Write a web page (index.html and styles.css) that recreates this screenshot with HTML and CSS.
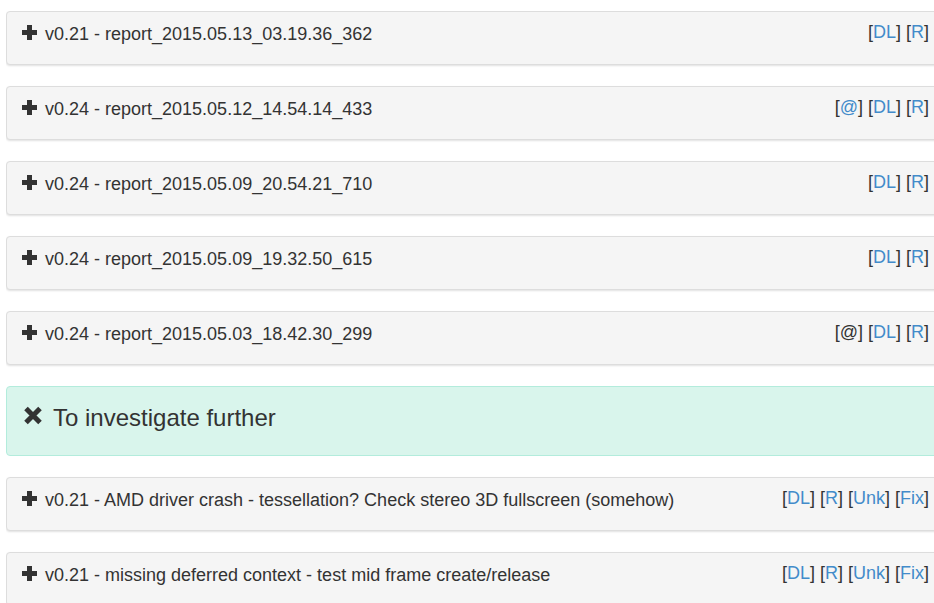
FILE: index.html
```html
<!DOCTYPE html>
<html>
<head>
<meta charset="utf-8">
<link rel="stylesheet" href="styles.css">
</head>
<body>
<div class="list">
  <div class="panel">
    <div class="title"><svg class="plus" viewBox="0 0 15 15"><rect x="5" y="0" width="5" height="15"/><rect x="0" y="5" width="15" height="5"/></svg>v0.21 - report_2015.05.13_03.19.36_362</div>
    <div class="links">[<a href="#">DL</a>] [<a href="#">R</a>]</div>
  </div>
  <div class="panel">
    <div class="title"><svg class="plus" viewBox="0 0 15 15"><rect x="5" y="0" width="5" height="15"/><rect x="0" y="5" width="15" height="5"/></svg>v0.24 - report_2015.05.12_14.54.14_433</div>
    <div class="links">[<a href="#">@</a>] [<a href="#">DL</a>] [<a href="#">R</a>]</div>
  </div>
  <div class="panel">
    <div class="title"><svg class="plus" viewBox="0 0 15 15"><rect x="5" y="0" width="5" height="15"/><rect x="0" y="5" width="15" height="5"/></svg>v0.24 - report_2015.05.09_20.54.21_710</div>
    <div class="links">[<a href="#">DL</a>] [<a href="#">R</a>]</div>
  </div>
  <div class="panel">
    <div class="title"><svg class="plus" viewBox="0 0 15 15"><rect x="5" y="0" width="5" height="15"/><rect x="0" y="5" width="15" height="5"/></svg>v0.24 - report_2015.05.09_19.32.50_615</div>
    <div class="links">[<a href="#">DL</a>] [<a href="#">R</a>]</div>
  </div>
  <div class="panel">
    <div class="title"><svg class="plus" viewBox="0 0 15 15"><rect x="5" y="0" width="5" height="15"/><rect x="0" y="5" width="15" height="5"/></svg>v0.24 - report_2015.05.03_18.42.30_299</div>
    <div class="links">[@] [<a href="#">DL</a>] [<a href="#">R</a>]</div>
  </div>
  <div class="alert">
    <svg class="remove" viewBox="0 0 20 19"><path d="M3 2.5 L17 16.5 M17 2.5 L3 16.5"/></svg>To investigate further
  </div>
  <div class="panel">
    <div class="title"><svg class="plus" viewBox="0 0 15 15"><rect x="5" y="0" width="5" height="15"/><rect x="0" y="5" width="15" height="5"/></svg>v0.21 - AMD driver crash - tessellation? Check stereo 3D fullscreen (somehow)</div>
    <div class="links">[<a href="#">DL</a>] [<a href="#">R</a>] [<a href="#">Unk</a>] [<a href="#">Fix</a>]</div>
  </div>
  <div class="panel">
    <div class="title"><svg class="plus" viewBox="0 0 15 15"><rect x="5" y="0" width="5" height="15"/><rect x="0" y="5" width="15" height="5"/></svg>v0.21 - missing deferred context - test mid frame create/release</div>
    <div class="links">[<a href="#">DL</a>] [<a href="#">R</a>] [<a href="#">Unk</a>] [<a href="#">Fix</a>]</div>
  </div>
</div>
</body>
</html>
```
FILE: styles.css
```css
html, body {
  overflow: hidden;
}
body {
  margin: 11px 0 0 6px;
  background: #fff;
  font-family: "Liberation Sans", Arial, sans-serif;
  color: #333;
}
.list {
  width: 939px;
  display: flex;
  flex-direction: column;
  gap: 21px;
}
.panel {
  box-sizing: border-box;
  height: 54px;
  background: #f5f5f5;
  border: 1px solid #ddd;
  border-radius: 4px;
  box-shadow: 0 1px 2px rgba(0, 0, 0, 0.12);
  padding: 9px 15px 0 15px;
  display: flex;
  justify-content: space-between;
  align-items: flex-start;
  font-size: 18px;
  line-height: 26px;
}
.title {
  white-space: nowrap;
}
.plus {
  width: 15px;
  height: 15px;
  fill: #333;
  margin-right: 8px;
  vertical-align: 0;
}
.links {
  white-space: nowrap;
  margin-top: -2px;
}
.links a {
  color: #428bca;
  text-decoration: none;
}
.alert {
  box-sizing: border-box;
  height: 70px;
  background: #d9f5ec;
  border: 1px solid #b3ecdc;
  border-radius: 4px;
  padding: 14px 17px 0 16px;
  font-size: 24px;
  line-height: 34px;
  white-space: nowrap;
}
.remove {
  width: 20px;
  height: 19px;
  stroke: #333;
  stroke-width: 5;
  fill: none;
  margin-right: 10px;
  vertical-align: 1px;
}
```
